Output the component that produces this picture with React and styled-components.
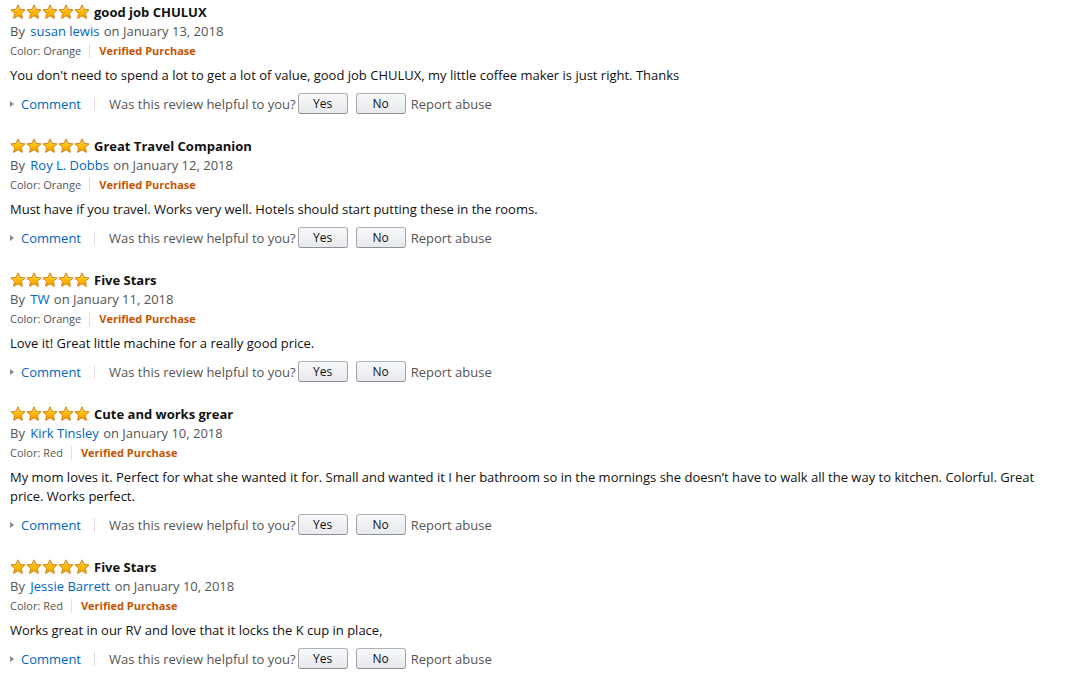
import styled, { createGlobalStyle } from "styled-components"

const GlobalStyle = createGlobalStyle`
    body {
        margin: 0;
        background: #fff;
        font-family: "Open Sans", "Noto Sans", sans-serif;
        color: #111;
    }
`

const reviews = [
    { title: "good job CHULUX", author: "susan lewis", date: "January 13, 2018", color: "Orange", body: "You don't need to spend a lot to get a lot of value, good job CHULUX, my little coffee maker is just right. Thanks" },
    { title: "Great Travel Companion", author: "Roy L. Dobbs", date: "January 12, 2018", color: "Orange", body: "Must have if you travel. Works very well. Hotels should start putting these in the rooms." },
    { title: "Five Stars", author: "TW", date: "January 11, 2018", color: "Orange", body: "Love it! Great little machine for a really good price." },
    { title: "Cute and works grear", author: "Kirk Tinsley", date: "January 10, 2018", color: "Red", body: "My mom loves it. Perfect for what she wanted it for. Small and wanted it I her bathroom so in the mornings she doesn\u2019t have to walk all the way to kitchen. Colorful. Great price. Works perfect." },
    { title: "Five Stars", author: "Jessie Barrett", date: "January 10, 2018", color: "Red", body: "Works great in our RV and love that it locks the K cup in place," },
]

function Star() {
    return (
        <svg width="16" height="16" viewBox="0 0 16 16">
            <defs>
                <linearGradient id="sg" x1="0" y1="0" x2="0" y2="1">
                    <stop offset="0" stopColor="#ffe36b" />
                    <stop offset="0.55" stopColor="#ffb800" />
                    <stop offset="1" stopColor="#f59a00" />
                </linearGradient>
            </defs>
            <path d="M8 0.8 L10.1 5.4 L15.1 5.9 L11.3 9.3 L12.4 14.4 L8 11.8 L3.6 14.4 L4.7 9.3 L0.9 5.9 L5.9 5.4 Z"
                fill="url(#sg)" stroke="#c8790a" strokeWidth="0.9" strokeLinejoin="round" />
        </svg>
    )
}

export default function App() {
    return (
        <>
            <GlobalStyle />
            <List>
                {reviews.map((r, i) => (
                    <Review key={i}>
                        <TitleRow>
                            <Stars>{[0, 1, 2, 3, 4].map(n => <Star key={n} />)}</Stars>
                            <Title>{r.title}</Title>
                        </TitleRow>
                        <Byline>By <Link>{r.author}</Link> on {r.date}</Byline>
                        <Meta>
                            <span>Color: {r.color}</span>
                            <Divider />
                            <Verified>Verified Purchase</Verified>
                        </Meta>
                        <Body>{r.body}</Body>
                        <Actions>
                            <Comment><Caret />Comment</Comment>
                            <Divider $h={14} $gap={14} />
                            <Helpful>Was this review helpful to you?</Helpful>
                            <Button>Yes</Button>
                            <Button>No</Button>
                            <Report>Report abuse</Report>
                        </Actions>
                    </Review>
                ))}
            </List>
        </>
    )
}

const List = styled.div`
    padding: 2px 10px 0;
    width: 1030px;
`

const Review = styled.div`
    margin-bottom: 22px;
`

const TitleRow = styled.div`
    display: flex;
    align-items: center;
    height: 20px;
`

const Stars = styled.div`
    display: flex;
    margin-right: 4px;
`

const Title = styled.span`
    font-size: 13px;
    font-weight: 700;
    color: #111;
`

const Byline = styled.div`
    font-size: 13px;
    line-height: 19px;
    color: #555;
`

const Link = styled.a`
    color: #0066c0;
    margin: 0 1px 0 2px;
`

const Meta = styled.div`
    display: flex;
    align-items: center;
    font-size: 11px;
    line-height: 19px;
    color: #555;
`

const Divider = styled.span`
    display: inline-block;
    width: 1px;
    height: ${p => p.$h || 14}px;
    background: #ddd;
    margin: 0 ${p => p.$gap || 9}px 0 ${p => p.$gap ? 5 : 8}px;
`

const Verified = styled.span`
    color: #c45500;
    font-weight: 700;
`

const Body = styled.div`
    font-size: 13px;
    line-height: 19px;
    color: #111;
    margin-top: 6px;
`

const Actions = styled.div`
    display: flex;
    align-items: center;
    margin-top: 8px;
    height: 21px;
    font-size: 13px;
`

const Comment = styled.span`
    display: flex;
    align-items: center;
    color: #0066c0;
    margin-right: 8px;
`

const Caret = styled.span`
    width: 0;
    height: 0;
    border-top: 3.5px solid transparent;
    border-bottom: 3.5px solid transparent;
    border-left: 4px solid #888;
    margin-right: 7px;
`

const Helpful = styled.span`
    color: #555;
    margin-right: 2px;
`

const Button = styled.button`
    width: 50px;
    height: 21px;
    margin-right: 8px;
    font-family: inherit;
    font-size: 12px;
    color: #111;
    background: linear-gradient(#f7f8fa, #e7e9ec);
    border: 1px solid #adb1b8;
    border-color: #adb1b8 #a2a6ac #8d9096;
    border-radius: 3px;
    padding: 0;
`

const Report = styled.span`
    color: #555;
    margin-left: -3px;
`
